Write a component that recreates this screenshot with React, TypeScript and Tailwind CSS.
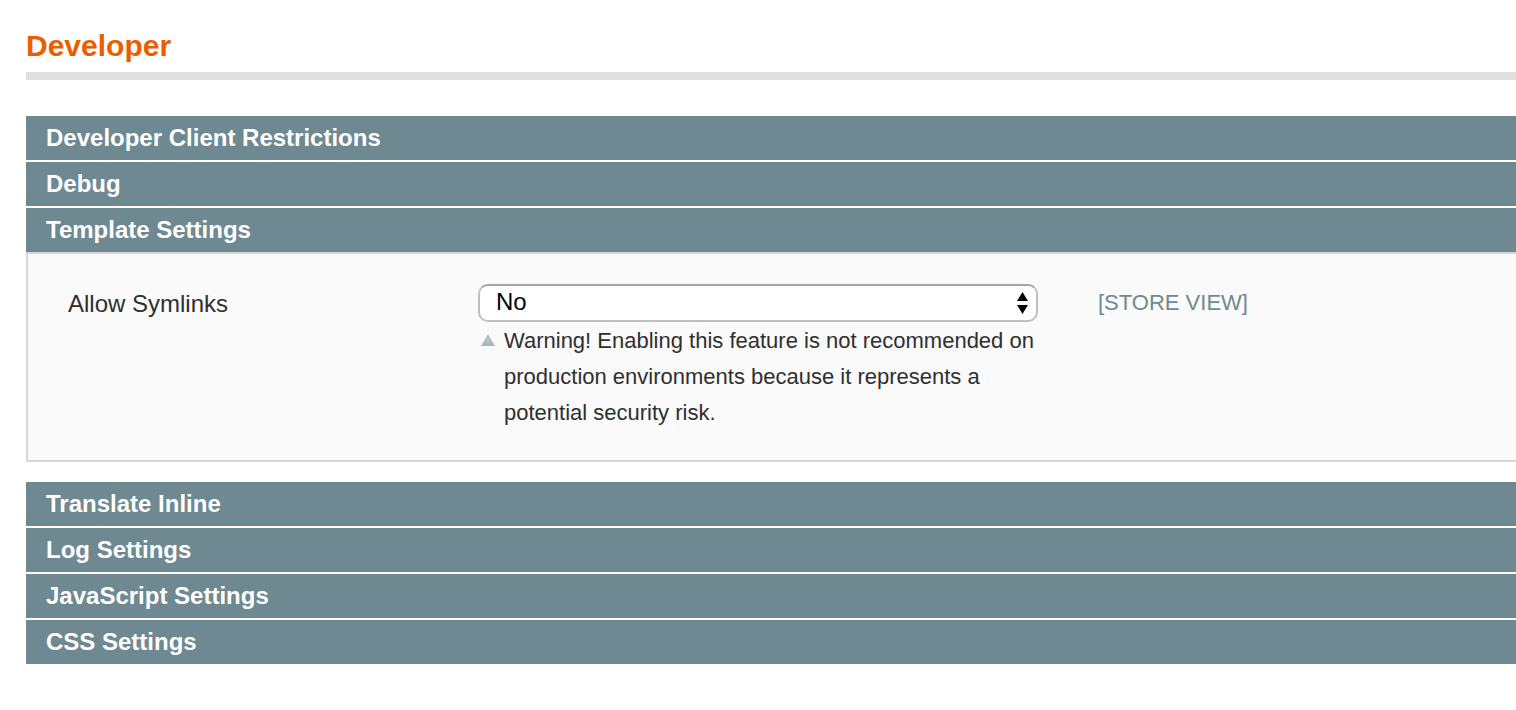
const bar =
  "block w-full h-11 bg-[#6f8992] px-5 text-left text-2xl leading-11 font-bold text-white";

function Section({ title, open = false }: { title: string; open?: boolean }) {
  return (
    <h2>
      <button type="button" aria-expanded={open} className={bar}>
        {title}
      </button>
    </h2>
  );
}

export default function App() {
  return (
    <main className="min-h-screen bg-white pt-6 pb-11 pl-[26px] font-['Liberation_Sans',Arial,sans-serif] text-[#2f2f2f]">
      <h1 className="h-14 border-b-8 border-[#dfdfdf] text-[30px] leading-11 font-bold text-[#eb5e00]">
        Developer
      </h1>
      <div className="mt-9 flex flex-col gap-0.5">
        <Section title="Developer Client Restrictions" />
        <Section title="Debug" />
        <Section title="Template Settings" open />
      </div>
      <div className="mb-5 flex items-start border-y-2 border-l-2 border-[#d6d6d6] bg-[#fafafa] pt-[30px] pb-[29px] pl-10">
        <label htmlFor="symlinks" className="w-[410px] shrink-0 text-2xl leading-10">
          Allow Symlinks
        </label>
        <div className="flex w-[560px] shrink-0 flex-col gap-px">
          <div className="relative">
            <select
              id="symlinks"
              defaultValue="No"
              className="block h-[38px] w-full appearance-none rounded-[10px] border-2 border-[#bfbfbf] border-t-[#a6a6a6] bg-white px-4 pb-0.5 text-2xl leading-8 text-black"
            >
              <option>No</option>
              <option>Yes</option>
            </select>
            <svg
              aria-hidden="true"
              viewBox="0 0 12 24"
              className="pointer-events-none absolute top-2 right-2.5 h-6 w-3"
            >
              <path d="M6.5 0L12 9H1zM6.5 22L12 13H1z" fill="#000" />
            </svg>
          </div>
          <p className="flex text-[22px] leading-9">
            <svg aria-hidden="true" viewBox="0 0 26 36" className="h-9 w-[26px] shrink-0">
              <defs>
                <linearGradient id="hint" x1="0" y1="0" x2="0" y2="1">
                  <stop offset="0" stopColor="#bccacd" />
                  <stop offset="1" stopColor="#a3b7ba" />
                </linearGradient>
              </defs>
              <path d="M10 11l7 12H3z" fill="url(#hint)" />
            </svg>
            <span>
              Warning! Enabling this feature is not recommended on production environments because
              it represents a potential security risk.
            </span>
          </p>
        </div>
        <span className="ml-[60px] text-[22px] leading-[38px] text-[#6f8992]">[STORE VIEW]</span>
      </div>
      <div className="flex flex-col gap-0.5">
        <Section title="Translate Inline" />
        <Section title="Log Settings" />
        <Section title="JavaScript Settings" />
        <Section title="CSS Settings" />
      </div>
    </main>
  );
}
